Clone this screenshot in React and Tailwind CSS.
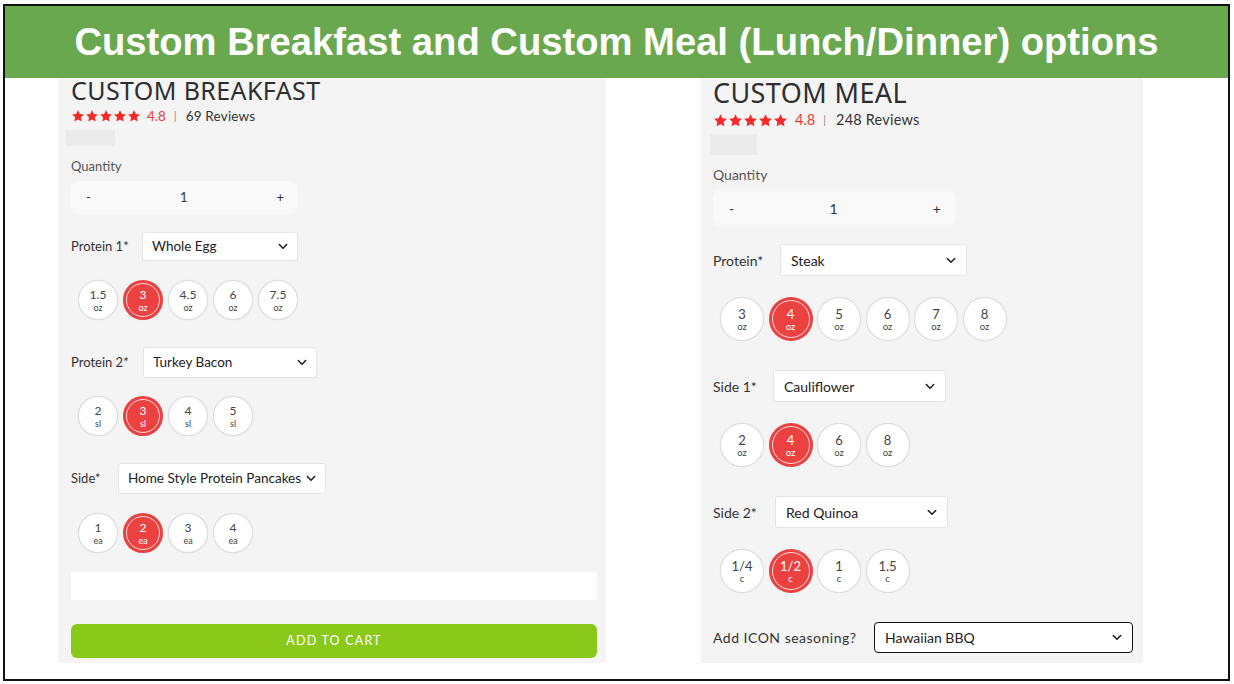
import React from "react";

const body = { fontFamily: "Lato, 'Open Sans', sans-serif" };
const head = { fontFamily: "'Noto Sans', 'DejaVu Sans', sans-serif" };

function Star({ size }) {
  return (
    <svg width={size} height={size} viewBox="0 0 24 24" className="block">
      <path
        d="M12 1.8l3.1 6.6 7.1.9-5.2 4.9 1.3 7.1L12 17.9l-6.3 3.4 1.3-7.1-5.2-4.9 7.1-.9z"
        fill="#f52a2a"
      />
    </svg>
  );
}

function Rating({ reviews, big }) {
  const s = big ? 15 : 14;
  return (
    <div className={`flex items-center h-[14px] ${big ? "text-[14.5px]" : "text-[13.5px]"}`} style={body}>
      <div className="flex">
        {[0, 1, 2, 3, 4].map((i) => (
          <Star key={i} size={s} />
        ))}
      </div>
      <span className={`${big ? "ml-[7px]" : "ml-[6px]"} text-[#f03a3a]`}>4.8</span>
      <span className="ml-[8px] text-[#888] text-[11px]">|</span>
      <span className={`${big ? "ml-[10px]" : "ml-[9px]"} text-[#333] tracking-[0.2px]`}>{reviews}</span>
    </div>
  );
}

function Chevron() {
  return (
    <svg width="10" height="7" viewBox="0 0 10 7" className="block">
      <path d="M1.3 1.5L5 5.2l3.7-3.7" stroke="#222" strokeWidth="1.6" fill="none" strokeLinecap="round" strokeLinejoin="round" />
    </svg>
  );
}

function Select({ value, w, h, big, dark }) {
  return (
    <div
      className={`flex items-center justify-between bg-white ${dark ? "border border-[#111] rounded-[4px]" : "border border-[#e4e4e4] rounded-[3px]"} ${big ? "text-[14px] pl-[10px] pr-[10px]" : "text-[13.5px] pl-[9px] pr-[9px]"} text-[#222]`}
      style={{ width: w, height: h, ...body }}
    >
      <span>{value}</span>
      <Chevron />
    </div>
  );
}

function Circles({ items, unit, sel, big }) {
  const d = big ? "w-[44px] h-[44px]" : "w-[40px] h-[40px]";
  return (
    <div className={`flex ml-[7px] ${big ? "gap-[4.5px]" : "gap-[5px]"}`} style={body}>
      {items.map((it, i) => {
        const on = i === sel;
        return (
          <div
            key={it}
            className={`${d} rounded-full flex flex-col items-center justify-center relative ${
              on ? "bg-[#ec4141] text-white" : "bg-white text-[#444] border border-[#dedede]"
            } shadow-[0_0_1px_rgba(0,0,0,0.15)]`}
          >
            {on && <div className="absolute inset-[3px] rounded-full border border-white/80" />}
            <span className={`${big ? "text-[13px]" : "text-[12px]"} leading-[14px] mt-[1px]`}>{it}</span>
            <span className={`${big ? "text-[9.5px]" : "text-[9px]"} leading-[10px] mt-[1px]`}>{unit}</span>
          </div>
        );
      })}
    </div>
  );
}

function Qty({ w, h, big }) {
  return (
    <div
      className={`flex items-center justify-between bg-[#f9f9f9] rounded-[8px] text-[#333] ${big ? "text-[14px] pl-[16px] pr-[15px]" : "text-[13px] pl-[15px] pr-[13px]"}`}
      style={{ width: w, height: h, ...body }}
    >
      <span>-</span>
      <span>1</span>
      <span>+</span>
    </div>
  );
}

function Row({ label, children, mt, gap, big, wide }) {
  return (
    <div className="flex items-center" style={{ marginTop: mt }}>
      <span
        className={`${big ? "text-[14px]" : "text-[13px]"} ${wide ? "tracking-[0.5px]" : ""} text-[#333]`}
        style={{ ...body, width: gap }}
      >
        {label}
      </span>
      {children}
    </div>
  );
}

export default function App() {
  return (
    <div className="w-[1234px] h-[684px] bg-white overflow-hidden">
      <div className="ml-[3px] mt-[4px] w-[1227px] h-[677px] border-2 border-[#111] flex flex-col">
        <div
          className="h-[72px] bg-[#6aa84f] flex items-center justify-center text-white font-bold text-[38.2px] leading-none pt-[1px]"
          style={{ fontFamily: "'Liberation Sans', Arial, sans-serif" }}
        >
          Custom Breakfast and Custom Meal (Lunch/Dinner) options
        </div>
        <div className="flex pl-[53px] gap-[95px]">
          {/* Left panel */}
          <div className="w-[548px] h-[585px] bg-[#f4f4f4] pl-[13px] pr-[9px] flex flex-col">
            <div className="h-[28px] leading-[28px] mt-[-2px] text-[25px] tracking-[0.4px] text-[#2e2e2e]" style={head}>
              CUSTOM BREAKFAST
            </div>
            <div className="mt-[5px]">
              <Rating reviews="69 Reviews" />
            </div>
            <div className="mt-[7px] ml-[-5px] w-[49px] h-[16px] bg-[#ebebeb]" />
            <div className="mt-[12px] h-[16px] leading-[16px] text-[13px] text-[#555]" style={body}>
              Quantity
            </div>
            <div className="mt-[7px]">
              <Qty w={226} h={33} />
            </div>
            <Row label="Protein 1*" mt={18} gap={71}>
              <Select value="Whole Egg" w={156} h={29} />
            </Row>
            <div className="mt-[19px]">
              <Circles items={["1.5", "3", "4.5", "6", "7.5"]} unit="oz" sel={1} />
            </div>
            <Row label="Protein 2*" mt={27} gap={72}>
              <Select value="Turkey Bacon" w={174} h={31} />
            </Row>
            <div className="mt-[18px]">
              <Circles items={["2", "3", "4", "5"]} unit="sl" sel={1} />
            </div>
            <Row label="Side*" mt={27} gap={47}>
              <Select value="Home Style Protein Pancakes" w={208} h={31} />
            </Row>
            <div className="mt-[19px]">
              <Circles items={["1", "2", "3", "4"]} unit="ea" sel={1} />
            </div>
            <div className="mt-[19px] h-[28px] bg-white" />
            <div
              className="mt-[24px] h-[34px] bg-[#8ac81a] rounded-[6px] flex items-center justify-center text-white text-[12.5px] tracking-[1.2px]"
              style={body}
            >
              ADD TO CART
            </div>
          </div>
          {/* Right panel */}
          <div className="w-[442px] h-[585px] bg-[#f4f4f4] pl-[12px] flex flex-col">
            <div className="h-[30px] leading-[30px] mt-[0px] text-[27px] tracking-[0.4px] text-[#2e2e2e]" style={head}>
              CUSTOM MEAL
            </div>
            <div className="mt-[5px]">
              <Rating reviews="248 Reviews" big />
            </div>
            <div className="mt-[7px] ml-[-3px] w-[47px] h-[21px] bg-[#ebebeb]" />
            <div className="mt-[11px] h-[17px] leading-[17px] text-[14px] text-[#555]" style={body}>
              Quantity
            </div>
            <div className="mt-[7px]">
              <Qty w={243} h={36} big />
            </div>
            <Row label="Protein*" mt={18} gap={67} big>
              <Select value="Steak" w={187} h={32} big />
            </Row>
            <div className="mt-[21px]">
              <Circles items={["3", "4", "5", "6", "7", "8"]} unit="oz" sel={1} big />
            </div>
            <Row label="Side 1*" mt={29} gap={60} big>
              <Select value="Cauliflower" w={173} h={32} big />
            </Row>
            <div className="mt-[21px]">
              <Circles items={["2", "4", "6", "8"]} unit="oz" sel={1} big />
            </div>
            <Row label="Side 2*" mt={29} gap={62} big>
              <Select value="Red Quinoa" w={173} h={32} big />
            </Row>
            <div className="mt-[21px]">
              <Circles items={["1/4", "1/2", "1", "1.5"]} unit="c" sel={1} big />
            </div>
            <Row label="Add ICON seasoning?" mt={29} gap={161} big wide>
              <Select value="Hawaiian BBQ" w={259} h={31} big dark />
            </Row>
          </div>
        </div>
      </div>
    </div>
  );
}
